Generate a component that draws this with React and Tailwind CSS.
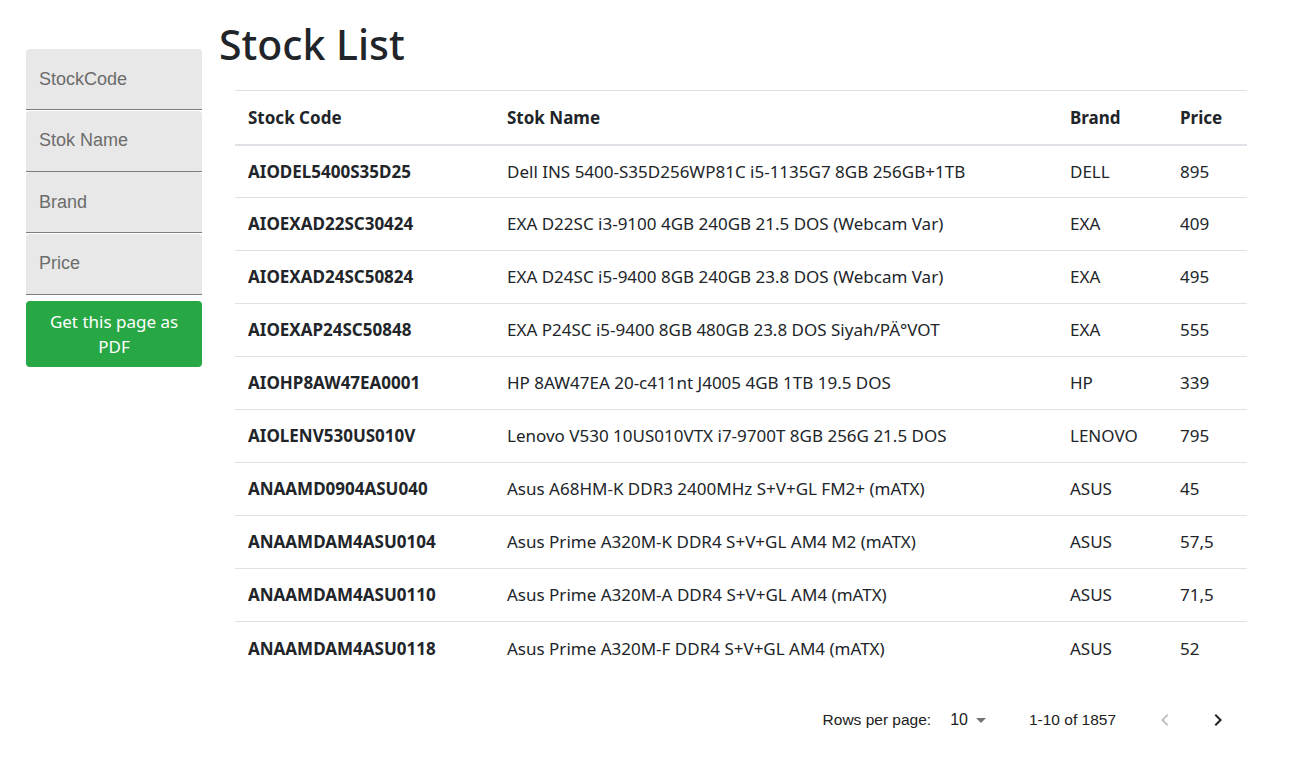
const stocks = [
  { code: 'AIODEL5400S35D25', name: 'Dell INS 5400-S35D256WP81C i5-1135G7 8GB 256GB+1TB', brand: 'DELL', price: '895' },
  { code: 'AIOEXAD22SC30424', name: 'EXA D22SC i3-9100 4GB 240GB 21.5 DOS (Webcam Var)', brand: 'EXA', price: '409' },
  { code: 'AIOEXAD24SC50824', name: 'EXA D24SC i5-9400 8GB 240GB 23.8 DOS (Webcam Var)', brand: 'EXA', price: '495' },
  { code: 'AIOEXAP24SC50848', name: 'EXA P24SC i5-9400 8GB 480GB 23.8 DOS Siyah/PÄ°VOT', brand: 'EXA', price: '555' },
  { code: 'AIOHP8AW47EA0001', name: 'HP 8AW47EA 20-c411nt J4005 4GB 1TB 19.5 DOS', brand: 'HP', price: '339' },
  { code: 'AIOLENV530US010V', name: 'Lenovo V530 10US010VTX i7-9700T 8GB 256G 21.5 DOS', brand: 'LENOVO', price: '795' },
  { code: 'ANAAMD0904ASU040', name: 'Asus A68HM-K DDR3 2400MHz S+V+GL FM2+ (mATX)', brand: 'ASUS', price: '45' },
  { code: 'ANAAMDAM4ASU0104', name: 'Asus Prime A320M-K DDR4 S+V+GL AM4 M2 (mATX)', brand: 'ASUS', price: '57,5' },
  { code: 'ANAAMDAM4ASU0110', name: 'Asus Prime A320M-A DDR4 S+V+GL AM4 (mATX)', brand: 'ASUS', price: '71,5' },
  { code: 'ANAAMDAM4ASU0118', name: 'Asus Prime A320M-F DDR4 S+V+GL AM4 (mATX)', brand: 'ASUS', price: '52' },
];

const filters = ['StockCode', 'Stok Name', 'Brand', 'Price'];

function FilterInput({ label }) {
  return (
    <div className="h-[61px] bg-[#e8e8e8] rounded-t-[4px] border-b border-[#7d7d7d] flex items-center px-[13px] mb-[0.5px]">
      <input
        placeholder={label}
        className="w-full bg-transparent outline-none text-[18px] text-[#6c6c6c] placeholder:text-[#6c6c6c] font-['Liberation_Sans',Arial,sans-serif]"
      />
    </div>
  );
}

function Pagination() {
  return (
    <div className="flex items-center justify-end h-[52px] mt-[19px] pr-[33px] text-[15.5px] text-[#212121] font-['Liberation_Sans',Arial,sans-serif]">
      <span>Rows per page:</span>
      <div className="flex items-center ml-[19px]">
        <span className="text-[16px]">10</span>
        <svg viewBox="0 0 24 24" className="w-[24px] h-[24px] fill-[#757575] ml-[1px]">
          <path d="M7 10l5 5 5-5z" />
        </svg>
      </div>
      <span className="ml-[36px]">1-10 of 1857</span>
      <div className="flex items-center ml-[37px] gap-[29px]">
        <svg viewBox="0 0 24 24" className="w-[24px] h-[24px] fill-[#c2c2c2]">
          <path d="M15.41 16.59L10.83 12l4.58-4.59L14 6l-6 6 6 6 1.41-1.41z" />
        </svg>
        <svg viewBox="0 0 24 24" className="w-[24px] h-[24px] fill-[#222]">
          <path d="M8.59 16.59L13.17 12 8.59 7.41 10 6l6 6-6 6-1.41-1.41z" />
        </svg>
      </div>
    </div>
  );
}

export default function App() {
  return (
    <div className="min-h-[771px] bg-white flex pl-[26px] font-['Noto_Sans',sans-serif] text-[#212529]">
      {/* Filtreler */}
      <aside className="w-[176px] shrink-0 mt-[49px]">
        {filters.map((f) => (
          <FilterInput key={f} label={f} />
        ))}
        <button className="mt-[6px] w-full h-[66px] bg-[#28a745] rounded-[4px] text-white text-[17px] leading-[25px] px-3">
          Get this page as PDF
        </button>
      </aside>

      {/* Liste */}
      <main className="flex-1 ml-[17px] mr-[31px]">
        <h1 className="text-[41px] font-medium leading-[48px] mt-[20px] mb-[22px]">Stock List</h1>
        <div className="mx-4">
          <table className="w-full border-collapse text-[17px]">
            <thead>
              <tr className="h-[54px] text-left border-t border-[#dee2e6] border-b-2">
                <th className="pl-[13px] w-[260px] font-bold">Stock Code</th>
                <th className="pl-[12px] w-[563px] font-bold">Stok Name</th>
                <th className="pl-[12px] w-[110px] font-bold">Brand</th>
                <th className="pl-[12px] font-bold">Price</th>
              </tr>
            </thead>
            <tbody>
              {stocks.map((s, i) => (
                <tr key={s.code} className={`h-[53px] ${i > 0 ? 'border-t border-[#dee2e6]' : ''}`}>
                  <td className="pl-[13px] font-bold">{s.code}</td>
                  <td className="pl-[12px]">{s.name}</td>
                  <td className="pl-[12px]">{s.brand}</td>
                  <td className="pl-[12px]">{s.price}</td>
                </tr>
              ))}
            </tbody>
          </table>
        </div>
        <Pagination />
      </main>
    </div>
  );
}
